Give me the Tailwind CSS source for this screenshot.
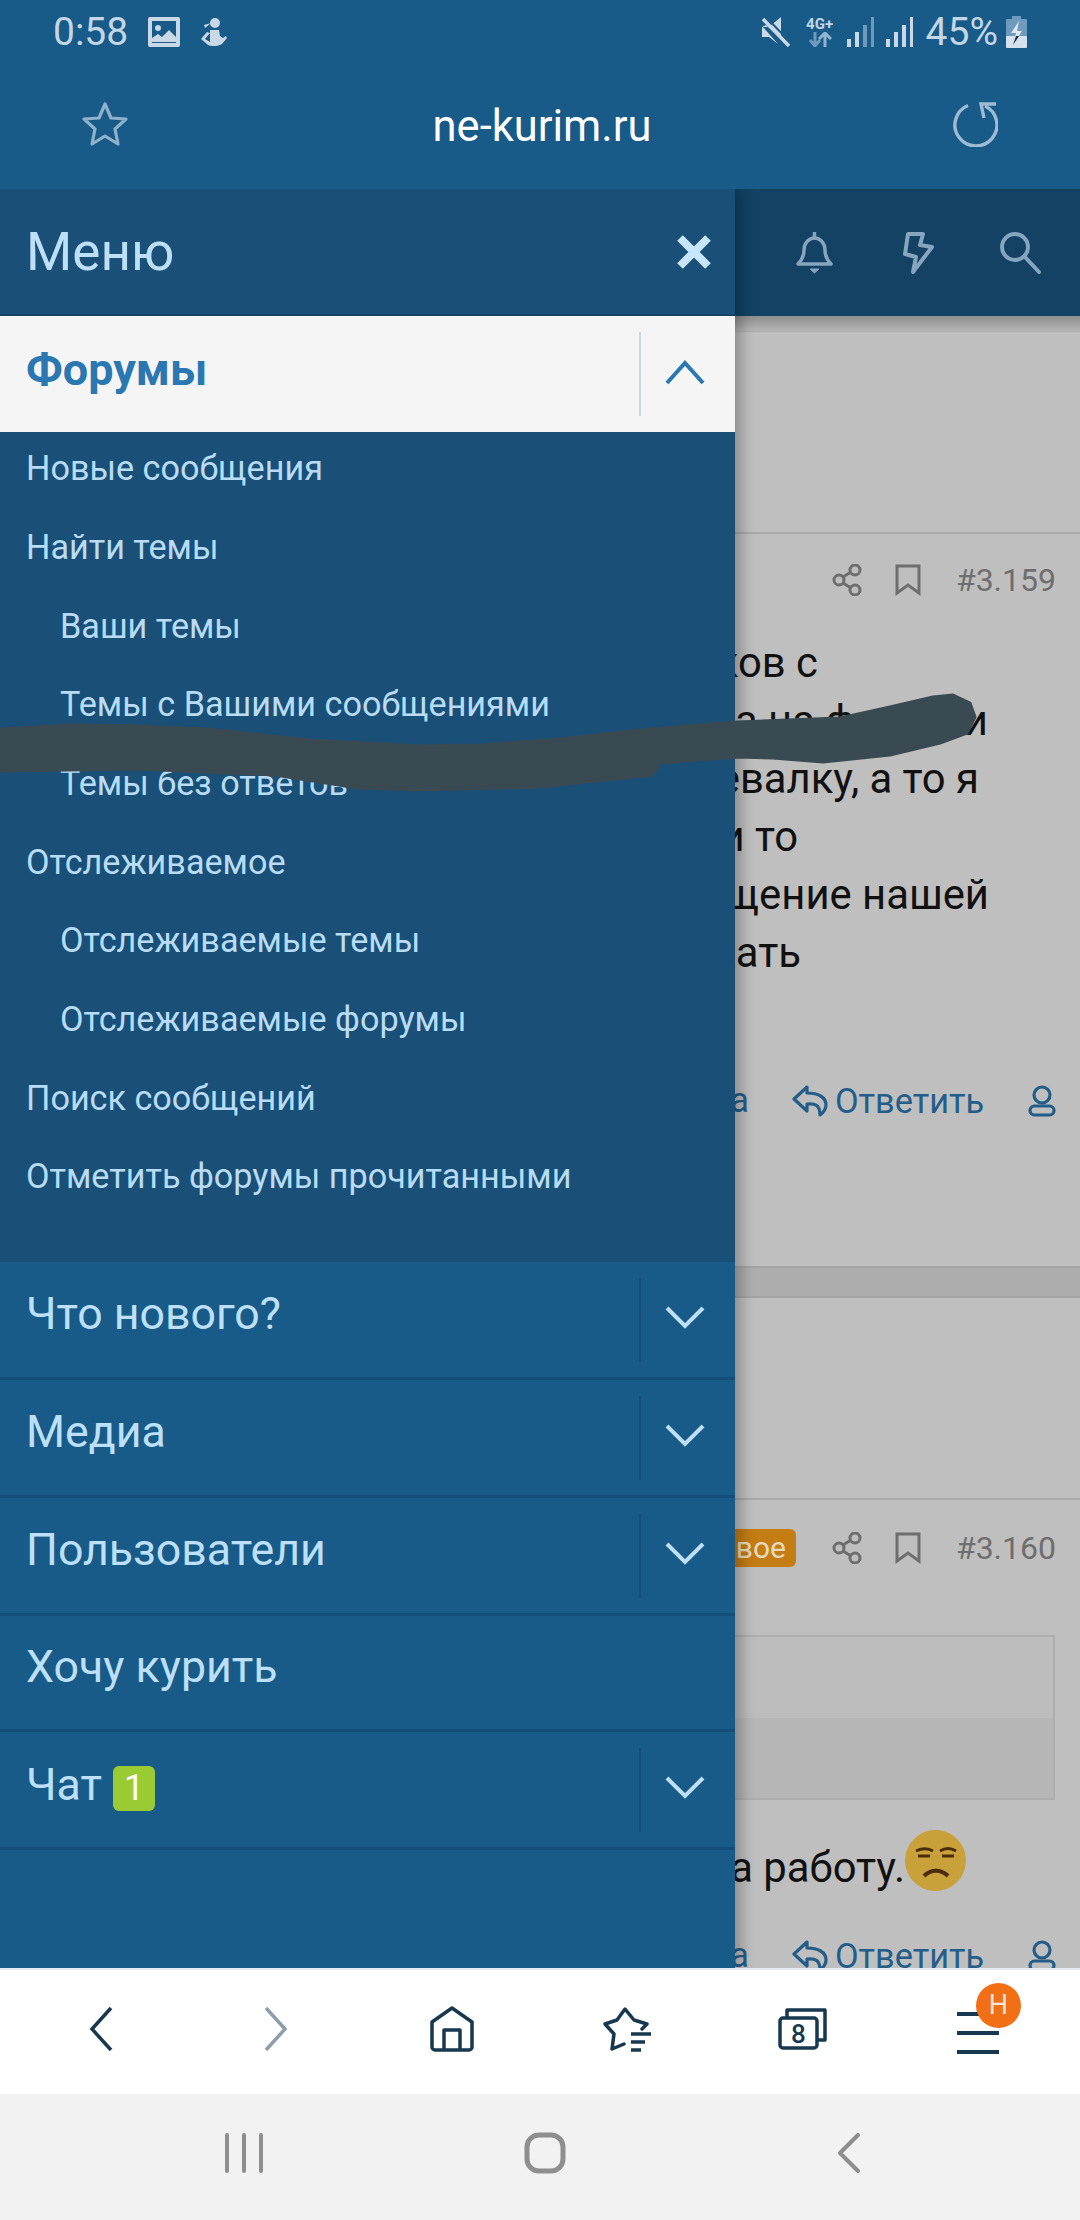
<!DOCTYPE html>
<html lang="ru">
<head>
<meta charset="utf-8">
<script src="https://cdn.jsdelivr.net/npm/@tailwindcss/browser@4"></script>
</head>
<body class="font-['Roboto',sans-serif]">
<div class="relative w-[1080px] h-[2220px] flex flex-col overflow-hidden bg-white">

  <!-- browser chrome -->
  <header class="h-[189px] shrink-0 bg-[#185a88] flex flex-col">
    <div class="h-[64px] flex items-center justify-between pl-[53px] pr-[53px] text-[#c3d6e6] text-[39px]">
      <div class="flex items-center">
        <span class="leading-none">0:58</span>
        <svg class="ml-[20px]" width="32" height="30" viewBox="0 0 32 30"><rect width="32" height="30" rx="2" fill="#c9d8e6"/><rect x="4" y="4" width="24" height="22" fill="#185a88"/><circle cx="10" cy="11" r="3" fill="#c9d8e6"/><path d="M4 25v-4l6-4 4 3 7-7 7 7v5z" fill="#c9d8e6"/></svg>
        <svg class="ml-[20px]" width="27" height="31" viewBox="0 0 27 31" fill="#c9d8e6"><circle cx="15" cy="6" r="5"/><path d="M4 8l7-2-6 5zM10 13h9l1 6 3 2 3-2 1 2-5 6c-3 2-10 3-14 1l-7-6 6-7 3 1-5 6 5 3z"/></svg>
      </div>
      <div class="flex items-center">
        <svg width="30" height="32" viewBox="0 0 30 32" fill="#c9d8e6"><path d="M1 11h7l12-10v22L5 9z"/><path d="M1 11v10h7l9 7-15-17z"/><path d="M2 3l26 27" stroke="#c9d8e6" stroke-width="3.5"/><path d="M0 1l26 27" stroke="#185a88" stroke-width="2" transform="translate(3 -2)"/></svg>
        <div class="ml-[13px] w-[32px] flex flex-col items-center">
          <span class="text-[15px] font-bold leading-[15px]">4G+</span>
          <svg width="24" height="15" viewBox="0 0 24 15"><path d="M7 0v12M2 8l5 6 5-6" stroke="#6f9abb" stroke-width="3" fill="none"/><path d="M17 15V3M11 7l6-6 6 6" stroke="#92b4ce" stroke-width="3" fill="none"/></svg>
        </div>
        <svg class="ml-[11px]" width="28" height="30" viewBox="0 0 28 30"><rect x="0" y="22" width="4" height="8" fill="#c9d8e6"/><rect x="8" y="15" width="4" height="15" fill="#c9d8e6"/><rect x="16" y="8" width="4" height="22" fill="#6f9abb"/><rect x="24" y="0" width="3" height="30" fill="#6f9abb"/></svg>
        <svg class="ml-[11px]" width="28" height="30" viewBox="0 0 28 30"><rect x="0" y="22" width="4" height="8" fill="#c9d8e6"/><rect x="8" y="15" width="4" height="15" fill="#c9d8e6"/><rect x="16" y="8" width="4" height="22" fill="#c9d8e6"/><rect x="24" y="0" width="3" height="30" fill="#c9d8e6"/></svg>
        <span class="ml-[12px] leading-none">45%</span>
        <svg class="ml-[8px]" width="21" height="32" viewBox="0 0 21 32"><rect x="6" y="0" width="9" height="3" fill="#6f9abb"/><rect y="3" width="21" height="29" rx="1" fill="#6f9abb"/><rect y="20" width="21" height="12" rx="1" fill="#d5e1ec"/><path d="M13 5L5 17h5L7 29l9-14h-5z" fill="#dfe8f0"/><path d="M10 20L7 29l6-9z" fill="#14283a"/></svg>
      </div>
    </div>
    <div class="flex-1 flex items-center justify-between pl-[82px] pr-[82px] pb-[5px]">
      <svg width="46" height="46" viewBox="0 0 46 46" fill="none" stroke="#8fb1cb" stroke-width="3.2" stroke-linejoin="round"><path d="M23 3l6 14 15 1-11 10 3 15-13-8-13 8 3-15L2 18l15-1z"/></svg>
      <span class="text-white text-[43.500px] leading-none mt-[6px] ml-[4px]">ne-kurim.ru</span>
      <svg width="46" height="46" viewBox="0 0 46 46" fill="none" stroke="#9dbbd2" stroke-width="3.4"><path d="M16 4.5A21 21 0 1 0 33 5"/><path d="M44 3H29l3 14"/></svg>
    </div>
  </header>

  <!-- page, with the drawer over it -->
  <main class="relative h-[1781px] shrink-0 overflow-hidden bg-[#bfbfbf]">

    <div class="h-[127px] bg-[#134265] flex items-center justify-end pr-[39px]">
      <svg width="37" height="42" viewBox="0 0 37 42" fill="none" stroke="#86a5be" stroke-width="3.500" stroke-linejoin="round"><path d="M2 32c4-4 6-8 6-14 0-7 5-12 10.500-12S29 11 29 18c0 6 2 10 6 14z"/><path d="M18.500 1v5" stroke-linecap="round"/><path d="M14 37h9l-4.500 4z" fill="#86a5be" stroke-width="1"/></svg>
      <svg class="ml-[70px]" width="31" height="42" viewBox="0 0 31 42" fill="none" stroke="#86a5be" stroke-width="4" stroke-linejoin="round"><path d="M5 2h15l-3 11 12 2-19 25 3-15-11-3z"/></svg>
      <svg class="ml-[66px]" width="41" height="42" viewBox="0 0 41 42" fill="none" stroke="#86a5be" stroke-width="4" stroke-linecap="round"><circle cx="15" cy="15" r="13"/><path d="M25 25l14 15"/></svg>
    </div>
    <div class="h-[16px] bg-gradient-to-b from-[#8e8e8e] to-[#b6b6b6] border-b border-[#adadad]"></div>

    <!-- post 3.159 -->
    <article class="h-[934px] flex flex-col">
      <div class="h-[202px] border-b-2 border-[#a9a9a9]"></div>
      <div class="h-[92px] flex items-center justify-end pr-[24px] text-[#6e6e6e]">
        <svg width="30" height="32" viewBox="0 0 30 32" fill="none" stroke="#6e6e6e" stroke-width="3"><circle cx="7" cy="16" r="5"/><circle cx="23" cy="6" r="5"/><circle cx="23" cy="26" r="5"/><path d="M11 13l8-5M11 19l8 5"/></svg>
        <svg class="ml-[33px]" width="26" height="32" viewBox="0 0 26 32" fill="none" stroke="#6e6e6e" stroke-width="3"><path d="M2 2h22v27l-11-8-11 8z"/></svg>
        <span class="ml-[35px] text-[32px] leading-none">#3.159</span>
      </div>
      <div class="mt-[8px] text-[41.800px] leading-[58px] text-[#111] flex flex-col">
        <p class="text-right pr-[262px] whitespace-nowrap">новичков с</p>
        <p class="text-right pr-[92px] whitespace-nowrap">сюда на форум и</p>
        <p class="text-right pr-[101px] whitespace-nowrap">перевалку, а то я</p>
        <p class="text-right pr-[282px] whitespace-nowrap">когда-нибудь и то</p>
        <p class="text-right pr-[91px] whitespace-nowrap">общение нашей</p>
        <p class="text-right pr-[279px] whitespace-nowrap">продолжать</p>
      </div>
      <div class="mt-[94px] h-[50px] flex items-center text-[#245d88] text-[34.300px]">
        <span class="ml-[600px] w-[149px] text-right whitespace-nowrap">Цитата</span>
        <svg class="ml-[43px]" width="36" height="32" viewBox="0 0 36 32" fill="none" stroke="#245d88" stroke-width="3.200" stroke-linejoin="round"><path d="M15 2L2 14l13 12v-7c8-1 13 1 13 11 4-3 6-6 6-10 0-8-8-12-19-12z"/></svg>
        <span class="ml-[7px] whitespace-nowrap leading-none">Ответить</span>
        <svg class="ml-[44px]" width="28" height="32" viewBox="0 0 28 32" fill="none" stroke="#245d88" stroke-width="3.200"><circle cx="14" cy="10" r="8"/><rect x="2" y="21" width="24" height="9" rx="4.500"/></svg>
      </div>
    </article>
    <div class="h-[32px] bg-[#aeaeae] border-y-2 border-[#a5a5a5]"></div>

    <!-- post 3.160 -->
    <article class="flex flex-col">
      <div class="h-[202px] border-b-2 border-[#a9a9a9]"></div>
      <div class="h-[96px] flex items-center justify-end pr-[24px] text-[#6e6e6e]">
        <span class="h-[38px] pl-[30px] pr-[10px] bg-[#c47d12] rounded-[6px] text-[#e8d9bd] text-[30px] leading-[38px] mr-[36px]">новое</span>
        <svg class="mr-[33px]" width="30" height="32" viewBox="0 0 30 32" fill="none" stroke="#6e6e6e" stroke-width="3"><circle cx="7" cy="16" r="5"/><circle cx="23" cy="6" r="5"/><circle cx="23" cy="26" r="5"/><path d="M11 13l8-5M11 19l8 5"/></svg>
        <svg class="mr-[35px]" width="26" height="32" viewBox="0 0 26 32" fill="none" stroke="#6e6e6e" stroke-width="3"><path d="M2 2h22v27l-11-8-11 8z"/></svg>
        <span class="text-[32px] leading-none">#3.160</span>
      </div>
      <div class="mt-[39px] ml-[500px] mr-[25px] h-[165px] border-2 border-[#aeaeae] flex flex-col">
        <div class="flex-1 bg-[#bdbdbd]"></div>
        <div class="flex-1 bg-[#b6b6b6]"></div>
      </div>
      <div class="mt-[30px] h-[61px] pr-[114px] flex items-start justify-end text-[41.800px] leading-[61px] text-[#111]">
        <span class="whitespace-nowrap mt-[7px]">на работу.</span>
        <svg width="61" height="61" viewBox="0 0 61 61"><circle cx="30.500" cy="30.500" r="30.500" fill="#c9a13b"/><path d="M11 21c6-3 12-3 17 0M35 21c5-3 11-3 16 0M13 26h12M37 26h12" stroke="#4a2c0c" stroke-width="3" fill="none"/><path d="M19 46c7-7 17-7 24 0" stroke="#4a2c0c" stroke-width="4" fill="none"/></svg>
      </div>
      <div class="mt-[40px] h-[50px] flex items-center text-[#245d88] text-[34.300px]">
        <span class="ml-[600px] w-[149px] text-right whitespace-nowrap">Цитата</span>
        <svg class="ml-[43px]" width="36" height="32" viewBox="0 0 36 32" fill="none" stroke="#245d88" stroke-width="3.200" stroke-linejoin="round"><path d="M15 2L2 14l13 12v-7c8-1 13 1 13 11 4-3 6-6 6-10 0-8-8-12-19-12z"/></svg>
        <span class="ml-[7px] whitespace-nowrap leading-none">Ответить</span>
        <svg class="ml-[44px]" width="28" height="32" viewBox="0 0 28 32" fill="none" stroke="#245d88" stroke-width="3.200"><circle cx="14" cy="10" r="8"/><rect x="2" y="21" width="24" height="9" rx="4.500"/></svg>
      </div>
    </article>

    <!-- drawer -->
    <aside class="absolute left-0 top-0 bottom-[2px] w-[735px] bg-[#185a88] shadow-[6px_0_14px_rgba(0,0,0,0.28)] flex flex-col text-[#bde0f8]">
      <div class="h-[127px] shrink-0 bg-[#1a5078] border-b-2 border-[#134265] flex items-center justify-between pl-[26px] pr-[24px]">
        <span class="text-[53px] leading-none mt-[2px]">Меню</span>
        <svg width="34" height="34" viewBox="0 0 34 34" stroke="#c7e6fb" stroke-width="8"><path d="M3 3l28 28M31 3L3 31"/></svg>
      </div>
      <div class="h-[116px] shrink-0 bg-[#f5f5f5] flex items-center">
        <span class="flex-1 pl-[26px] text-[45px] font-bold text-[#2a77b2] leading-none pb-[9px]">Форумы</span>
        <span class="w-[2px] h-[84px] bg-[#c5d8e6]"></span>
        <span class="w-[94px] pr-[6px] pb-[3px] flex justify-center"><svg width="40" height="25" viewBox="0 0 40 25" fill="none" stroke="#2a77b2" stroke-width="4"><path d="M2 23L20 3l18 20"/></svg></span>
      </div>
      <ul class="h-[830px] shrink-0 bg-[#1a5078] text-[34.200px] text-[#b8dcf5]">
        <li class="h-[78.700px] pl-[26px] flex items-center pb-[5px]">Новые сообщения</li>
        <li class="h-[78.700px] pl-[26px] flex items-center pb-[5px]">Найти темы</li>
        <li class="h-[78.700px] pl-[60px] flex items-center pb-[5px]">Ваши темы</li>
        <li class="h-[78.700px] pl-[60px] flex items-center pb-[5px]">Темы с Вашими сообщениями</li>
        <li class="h-[78.700px] pl-[60px] flex items-center pb-[5px]">Темы без ответов</li>
        <li class="h-[78.700px] pl-[26px] flex items-center pb-[5px]">Отслеживаемое</li>
        <li class="h-[78.700px] pl-[60px] flex items-center pb-[5px]">Отслеживаемые темы</li>
        <li class="h-[78.700px] pl-[60px] flex items-center pb-[5px]">Отслеживаемые форумы</li>
        <li class="h-[78.700px] pl-[26px] flex items-center pb-[5px]">Поиск сообщений</li>
        <li class="h-[78.700px] pl-[26px] flex items-center pb-[5px]">Отметить форумы прочитанными</li>
      </ul>
      <ul class="text-[44.700px] text-[#bde0f8]">
        <li class="h-[118px] border-b-[3px] border-[#154e78] flex items-center">
          <span class="flex-1 pl-[26px] leading-none pb-[10px]">Что нового?</span>
          <span class="w-[2px] h-[84px] bg-[#154e78]"></span>
          <span class="w-[94px] pr-[6px] pb-[4px] flex justify-center"><svg width="40" height="23" viewBox="0 0 40 23" fill="none" stroke="#bde0f8" stroke-width="4"><path d="M2 2l18 18L38 2"/></svg></span>
        </li>
        <li class="h-[118px] border-b-[3px] border-[#154e78] flex items-center">
          <span class="flex-1 pl-[26px] leading-none pb-[10px]">Медиа</span>
          <span class="w-[2px] h-[84px] bg-[#154e78]"></span>
          <span class="w-[94px] pr-[6px] pb-[4px] flex justify-center"><svg width="40" height="23" viewBox="0 0 40 23" fill="none" stroke="#bde0f8" stroke-width="4"><path d="M2 2l18 18L38 2"/></svg></span>
        </li>
        <li class="h-[118px] border-b-[3px] border-[#154e78] flex items-center">
          <span class="flex-1 pl-[26px] leading-none pb-[10px]">Пользователи</span>
          <span class="w-[2px] h-[84px] bg-[#154e78]"></span>
          <span class="w-[94px] pr-[6px] pb-[4px] flex justify-center"><svg width="40" height="23" viewBox="0 0 40 23" fill="none" stroke="#bde0f8" stroke-width="4"><path d="M2 2l18 18L38 2"/></svg></span>
        </li>
        <li class="h-[116px] border-b-[3px] border-[#154e78] flex items-center">
          <span class="flex-1 pl-[26px] leading-none pb-[10px]">Хочу курить</span>
        </li>
        <li class="h-[118px] border-b-[3px] border-[#154e78] flex items-center">
          <span class="flex-1 pl-[26px] flex items-center pb-[8px]">
            <span class="leading-none">Чат</span>
            <span class="ml-[11px] w-[42px] h-[45px] mt-[6px] bg-[#9acb32] rounded-[6px] text-white text-[36px] leading-[45px] text-center">1</span>
          </span>
          <span class="w-[2px] h-[84px] bg-[#154e78]"></span>
          <span class="w-[94px] pr-[6px] pb-[4px] flex justify-center"><svg width="40" height="23" viewBox="0 0 40 23" fill="none" stroke="#bde0f8" stroke-width="4"><path d="M2 2l18 18L38 2"/></svg></span>
        </li>
      </ul>
    </aside>
    <div class="absolute left-0 right-0 bottom-0 h-[2px] bg-[#e3ebf1]"></div>
  </main>

  <!-- browser toolbar -->
  <nav class="h-[124px] shrink-0 bg-white relative">
    <div class="h-full pb-[6px] grid grid-cols-6 items-center justify-items-center pl-[13px] pr-[14px]">
      <svg width="24" height="46" viewBox="0 0 24 46" fill="none" stroke="#17384f" stroke-width="3.500"><path d="M22 2L3 23l19 21"/></svg>
      <svg width="24" height="46" viewBox="0 0 24 46" fill="none" stroke="#8d9fad" stroke-width="3.500"><path d="M2 2l19 21L2 44"/></svg>
      <svg width="44" height="46" viewBox="0 0 44 46" fill="none" stroke="#17384f" stroke-width="3.500" stroke-linejoin="round"><path d="M2 16L22 2l20 14v25a3 3 0 0 1-3 3H5a3 3 0 0 1-3-3z"/><path d="M14 44V24h16v20"/></svg>
      <svg width="48" height="45" viewBox="0 0 48 45" fill="none" stroke="#17384f" stroke-width="3.500" stroke-linejoin="round" stroke-linecap="round"><path d="M39 22l5-5-13-4-9-11-8 11-12 4 9 10-2 15 12-5"/><path d="M28 27h20M28 35h14M28 43h10" stroke-linecap="butt" stroke-width="3.500"/></svg>
      <svg width="49" height="42" viewBox="0 0 49 42" fill="none" stroke="#17384f" stroke-width="3.500" stroke-linejoin="round"><path d="M9 10V2h38v30h-8"/><rect x="2" y="10" width="37" height="30" rx="3" fill="#fff"/><text x="20.500" y="35" text-anchor="middle" font-family="Roboto, sans-serif" font-size="26" font-weight="500" fill="#17384f" stroke="none">8</text></svg>
      <div class="w-[42px] flex flex-col gap-[15px] pt-[8px]">
        <span class="h-[4px] bg-[#17384f]"></span>
        <span class="h-[4px] bg-[#17384f]"></span>
        <span class="h-[4px] bg-[#17384f]"></span>
      </div>
    </div>
    <span class="absolute left-[976px] top-[13px] w-[45px] h-[45px] rounded-full bg-[#f36f16] text-[#f8e6d6] text-[27px] leading-[45px] text-center">Н</span>
  </nav>

  <!-- system navigation -->
  <div class="flex-1 bg-[#f2f2f2] flex items-center justify-between pl-[225px] pr-[219px] pb-[9px]">
    <svg width="38" height="40" viewBox="0 0 38 40" stroke="#8e8e8e" stroke-width="4" stroke-linecap="round"><path d="M2 2v36M19 2v36M36 2v36"/></svg>
    <svg class="ml-[-10px]" width="42" height="42" viewBox="0 0 42 42" fill="none" stroke="#8e8e8e" stroke-width="5"><rect x="3" y="3" width="36" height="36" rx="12"/></svg>
    <svg width="24" height="40" viewBox="0 0 24 40" fill="none" stroke="#8e8e8e" stroke-width="4" stroke-linecap="round" stroke-linejoin="round"><path d="M21 2L3 20l18 18"/></svg>
  </div>

  <!-- the scribble drawn over the screenshot -->
  <svg class="absolute left-0 top-[690px]" width="1080" height="105" viewBox="0 690 1080 105"><path d="M0 729L69 725 138 726 207 729 310 740 420 746 482 745 560 739 640 730 737 722 840 718 890 707 933 697 953 695 970 703 975 717 967 733 940 743 890 755 823 762 773 758 737 757 660 763 653 775 540 787 420 790 358 788 275 775 138 769 0 771Z" fill="#3a4a52" stroke="#3a4a52" stroke-width="3" stroke-linejoin="round"/></svg>
</div>
</body>
</html>
